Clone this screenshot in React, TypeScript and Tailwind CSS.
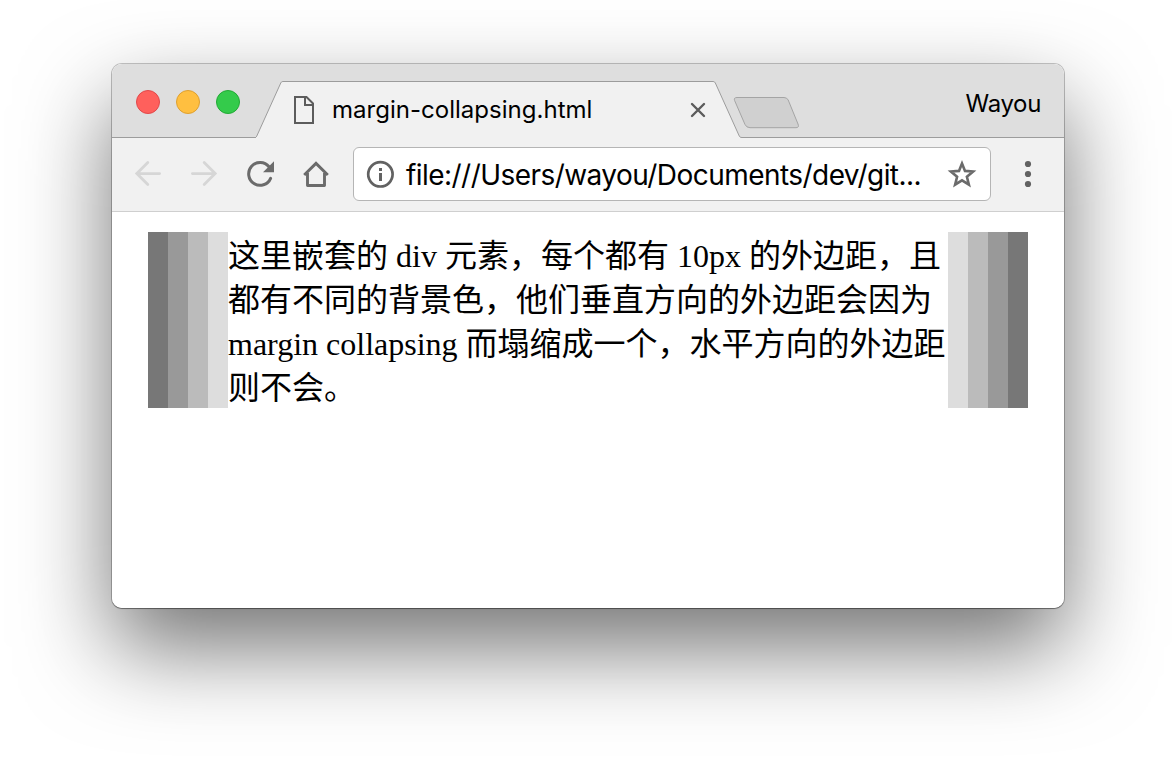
import React from "react";

function TabShape() {
  return (
    <svg className="absolute inset-0" width="486" height="57" viewBox="0 0 486 57" fill="none">
      <path d="M-1 57 C0 56.5 .3 56 .8 55 L24.3 3 C25 1.2 25.6 .5 27 .5 H457 C458.4 .5 459 1.2 459.8 3 L482.8 54 C483.6 55.8 484 56.5 486 56.5 V57 Z" fill="#f1f1f1" />
      <path d="M-1 56.5 C0 56.3 .3 55.8 .8 55 L24.3 3 C25 1.2 25.6 .5 27 .5 H457 C458.4 .5 459 1.2 459.8 3 L482.8 54 C483.6 55.8 484 56.5 486 56.5" stroke="#9c9c9c" />
    </svg>
  );
}

function Toolbar() {
  return (
    <div className="flex h-[74px] shrink-0 items-center border-b border-[#cfcfcf] bg-[#f1f1f1] pb-px">
      <div className="flex w-[241px] shrink-0 pl-5">
        <svg className="mr-6 shrink-0" width="32" height="32" viewBox="0 0 32 32" fill="none" stroke="#d6d6d6" strokeWidth="2.8" strokeLinecap="round">
          <path d="M15.8 4.6 L4.8 15.6 L15.8 26.6 M5 15.6 H27.6" />
        </svg>
        <svg className="mr-6 shrink-0" width="32" height="32" viewBox="0 0 32 32" fill="none" stroke="#d6d6d6" strokeWidth="2.8" strokeLinecap="round">
          <path d="M16.2 4.6 L27.2 15.6 L16.2 26.6 M27 15.6 H4.4" />
        </svg>
        <svg className="mr-6 shrink-0" width="32" height="32" viewBox="0 0 32 32">
          <path d="M26.6 20.3 A11.4 11.4 0 1 1 25 8.8" fill="none" stroke="#6b6b6b" strokeWidth="3" strokeLinecap="round" />
          <path d="M30 3.2 V14.2 H19 Z" fill="#6b6b6b" />
        </svg>
        <svg className="shrink-0" width="32" height="32" viewBox="0 0 32 32" fill="none" stroke="#6b6b6b" strokeWidth="2.9">
          <path d="M4.2 17 L16 5.4 L27.8 17" />
          <path d="M7.5 15 V27.5 H24.5 V15" strokeLinejoin="round" />
        </svg>
      </div>
      <div className="flex h-[54px] w-[638px] shrink-0 items-center rounded-[6px] border border-[#b5b5b5] bg-white pl-[12px]">
        <svg className="shrink-0" width="28" height="28" viewBox="0 0 28 28">
          <circle cx="14.4" cy="14.3" r="12.2" fill="none" stroke="#626262" strokeWidth="2.7" />
          <path d="M13 8 H16 V11 H13 Z M13 13 H16 V21 H13 Z" fill="#626262" />
        </svg>
        <span className="relative top-px ml-3 w-[520px] text-[28px] leading-[40px] tracking-[-0.55px] whitespace-nowrap">file:///Users/wayou/Documents/dev/git...</span>
        <svg className="ml-[21px] shrink-0" width="30" height="30" viewBox="0 0 30 30">
          <path d="M15 4.4 L18 11.9 L26.1 12.5 L19.9 17.7 L21.9 25.6 L15 21.3 L8.1 25.6 L10.1 17.7 L3.9 12.5 L12 11.9 Z" fill="none" stroke="#6b6b6b" strokeWidth="2.6" />
        </svg>
      </div>
      <svg className="ml-[33px] shrink-0" width="8" height="28" viewBox="0 0 8 28" fill="#626262">
        <circle cx="4" cy="4" r="3.1" />
        <circle cx="4" cy="14" r="3.1" />
        <circle cx="4" cy="24" r="3.1" />
      </svg>
    </div>
  );
}

export default function App() {
  return (
    <main className="h-[768px] w-[1176px] overflow-hidden bg-white px-[112px] pt-16 font-['Inter','Noto_Sans_CJK_SC',sans-serif] text-black">
      <div className="rounded-[10px] shadow-[0_0_0_1px_rgba(0,0,0,0.22),0_1px_1px_rgba(0,0,0,0.3),0_40px_90px_rgba(0,0,0,0.55)]">
        <div className="flex h-[544px] w-[952px] flex-col overflow-hidden rounded-[10px] bg-white">
          <div className="flex h-[74px] shrink-0 border-b border-[#9c9c9c] bg-[#dedede]">
            <div className="flex w-36 shrink-0 gap-4 pt-[26px] pl-6">
              <i className="h-6 w-6 rounded-full border border-[#e2484a] bg-[#ff605c]" />
              <i className="h-6 w-6 rounded-full border border-[#dfa02f] bg-[#ffbf40]" />
              <i className="h-6 w-6 rounded-full border border-[#22aa35] bg-[#34cb4b]" />
            </div>
            <div className="relative mt-[17px] h-[57px] w-[486px] shrink-0">
              <TabShape />
              <div className="relative flex h-[57px] items-center pl-[37px]">
                <svg className="shrink-0" width="22" height="30" viewBox="0 0 22 30" fill="none" stroke="#5c5c5c" strokeWidth="2">
                  <path d="M2 2 H13.5 L20 8.5 V28 H2 Z" />
                  <path d="M12 2 V10 H20" />
                </svg>
                <span className="ml-[17px] w-[340px] text-[24px] leading-8 tracking-[0.02px] whitespace-nowrap">margin-collapsing.html</span>
                <svg className="ml-[18px] shrink-0" width="16" height="16" viewBox="0 0 16 16" stroke="#5c5c5c" strokeWidth="2.4" strokeLinecap="round">
                  <path d="M2 2 L14 14 M14 2 L2 14" />
                </svg>
              </div>
            </div>
            <svg className="mt-8 -ml-[9px] shrink-0" width="67" height="34" viewBox="0 0 67 34">
              <path d="M4 1.5 H51 Q54 1.5 55.2 4 L65 28 Q66.5 31.7 63 31.7 H17 Q13.5 31.7 12 28.5 L1.6 4.5 Q.5 1.5 4 1.5 Z" fill="#d0d0d0" stroke="#a4a4a4" />
            </svg>
            <span className="mt-6 mr-[23px] ml-auto text-[24px] leading-8 tracking-[-0.35px]">Wayou</span>
          </div>
          <Toolbar />
          <div className="mx-9 mt-5 bg-[#777] px-5">
            <div className="bg-[#999] px-5">
              <div className="bg-[#bbb] px-5">
                <div className="bg-[#ddd] px-5">
                  <p className="h-[176px] bg-white pt-0.5 font-['Liberation_Serif','Noto_Sans_CJK_SC',serif] text-[32px] leading-[44px] whitespace-nowrap">
                    <span className="block h-11">这里嵌套的 div 元素，每个都有 10px 的外边距，且</span>
                    <span className="block h-11">都有不同的背景色，他们垂直方向的外边距会因为</span>
                    <span className="block h-11">margin collapsing 而塌缩成一个，水平方向的外边距</span>
                    <span className="block h-11">则不会。</span>
                  </p>
                </div>
              </div>
            </div>
          </div>
        </div>
      </div>
    </main>
  );
}
